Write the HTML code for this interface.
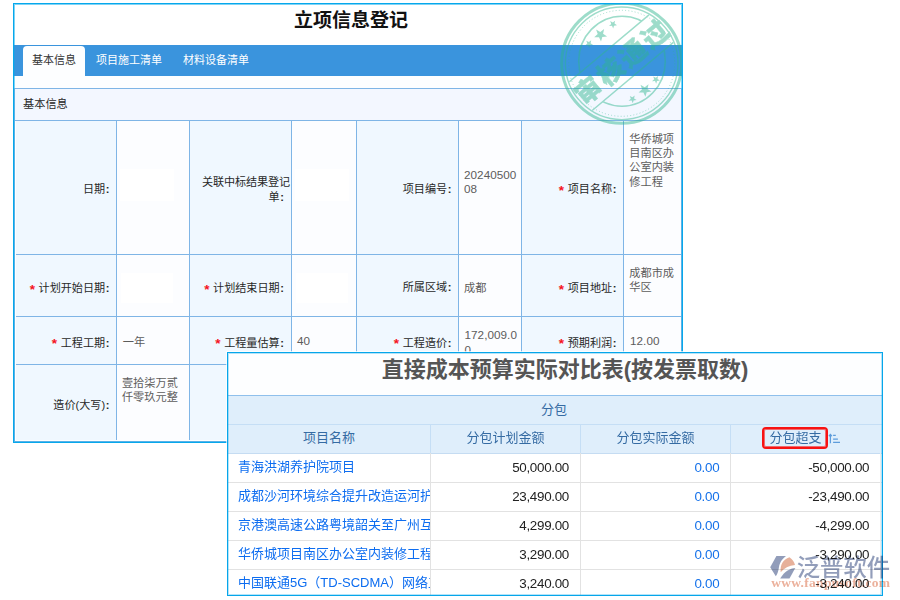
<!DOCTYPE html>
<html lang="zh-CN">
<head>
<meta charset="utf-8">
<title>立项信息登记</title>
<style>
html,body{margin:0;padding:0;}
body{width:900px;height:600px;position:relative;overflow:hidden;background:#fff;
  font-family:"Liberation Sans","Noto Sans CJK SC",sans-serif;color:#333;}
div,span{box-sizing:border-box;}
.abs{position:absolute;}
#form{left:13px;top:3px;width:670px;height:440px;border:1px solid #06a8ec;background:#fff;box-shadow:inset 0 0 0 1px rgba(6,168,236,.3);}
#ftitle{left:14px;top:4px;width:668px;height:41px;text-align:center;font-weight:bold;font-size:19px;line-height:33px;color:#111;padding-left:6px;}
#tabbar{left:14px;top:45px;width:668px;height:31px;background:#3a94dd;}
.tab{position:absolute;top:45px;height:31px;line-height:30px;font-size:11px;color:#fff;white-space:nowrap;}
#tab1{left:23px;top:46px;width:62px;height:30px;line-height:28px;background:#fdfeff;color:#333;border-radius:4px 4px 0 0;text-align:center;}
#gap{left:15px;top:76px;width:666px;height:12px;background:#fdfeff;}
#grid{left:14px;top:88px;width:668px;height:354px;background:#7fb5e6;}
#gw{left:15px;top:121px;width:666px;height:320px;background:#fff;}
#gl{left:16px;top:120px;width:665px;height:320px;background:#7fb5e6;}
.bg{position:absolute;}
.l{background:#f0f8ff;}
.v{background:#fcfdff;}
.t{position:absolute;font-size:11.1px;line-height:14.5px;white-space:nowrap;}
.lt{color:#282828;text-align:right;}
.vt{color:#5c5c5c;font-size:11.2px;line-height:14.2px;}
.dg{font-size:11.7px;letter-spacing:0.05px;}
.co{font-weight:bold;margin-left:0.6px;}
.mr{margin-right:-6px;letter-spacing:-0.1px;}
.star{color:#f5141e;font-size:13.5px;line-height:0;margin-right:3.6px;position:relative;top:1.4px;font-weight:bold;}
#panel{left:227px;top:352px;width:656px;height:244px;border:1px solid #06a6ea;background:#fff;box-shadow:inset 0 0 0 1px rgba(6,166,234,.3), 0 0 0 1px rgba(255,255,255,.7);}
#ptitle{left:228px;top:353px;width:654px;height:42px;text-align:center;font-weight:bold;font-size:22px;line-height:34px;color:#555;background:#fdfeff;padding-left:20px;}
.hb{position:absolute;background:#dfeefb;color:#356ba3;font-size:13px;text-align:center;}
.r{position:absolute;font-size:13px;line-height:27px;height:28px;white-space:nowrap;overflow:hidden;background:#fff;}
.n{color:#0d6df0;padding-left:10px;line-height:26px;}
.a{text-align:right;padding-right:11px;color:#222;}
.a2{padding-right:12.8px;}
.b{text-align:right;padding-right:10.7px;color:#1672ea;}
.num{font-size:13.4px;letter-spacing:-0.3px;}
</style>
</head>
<body>
<div id="form" class="abs"></div>
<div id="ftitle" class="abs">立项信息登记</div>
<div id="tabbar" class="abs"></div>
<div id="gap" class="abs"></div>
<div id="tab1" class="tab">基本信息</div>
<div class="tab" style="left:96px;">项目施工清单</div>
<div class="tab" style="left:183px;">材料设备清单</div>
<div id="grid" class="abs"></div>
<div id="gw" class="abs"></div>
<div id="gl" class="abs"></div>
<div class="bg" style="left:15px;top:89px;width:666px;height:31px;background:#f3f7ff;"></div>
<div class="t lt" style="left:23px;top:97px;font-size:11.2px;">基本信息</div>
<div class="bg l" style="left:16px;top:121px;width:100px;height:133px;"></div>
<div class="bg v" style="left:117px;top:121px;width:72px;height:133px;"></div>
<div class="bg l" style="left:190px;top:121px;width:101px;height:133px;"></div>
<div class="bg v" style="left:292px;top:121px;width:64px;height:133px;"></div>
<div class="bg l" style="left:357px;top:121px;width:101px;height:133px;"></div>
<div class="bg v" style="left:459px;top:121px;width:62px;height:133px;"></div>
<div class="bg l" style="left:522px;top:121px;width:101px;height:133px;"></div>
<div class="bg v" style="left:624px;top:121px;width:57px;height:133px;"></div>
<div class="bg l" style="left:16px;top:255px;width:100px;height:61px;"></div>
<div class="bg v" style="left:117px;top:255px;width:72px;height:61px;"></div>
<div class="bg l" style="left:190px;top:255px;width:101px;height:61px;"></div>
<div class="bg v" style="left:292px;top:255px;width:64px;height:61px;"></div>
<div class="bg l" style="left:357px;top:255px;width:101px;height:61px;"></div>
<div class="bg v" style="left:459px;top:255px;width:62px;height:61px;"></div>
<div class="bg l" style="left:522px;top:255px;width:101px;height:61px;"></div>
<div class="bg v" style="left:624px;top:255px;width:57px;height:61px;"></div>
<div class="bg l" style="left:16px;top:317px;width:100px;height:47px;"></div>
<div class="bg v" style="left:117px;top:317px;width:72px;height:47px;"></div>
<div class="bg l" style="left:190px;top:317px;width:101px;height:47px;"></div>
<div class="bg v" style="left:292px;top:317px;width:64px;height:47px;"></div>
<div class="bg l" style="left:357px;top:317px;width:101px;height:47px;"></div>
<div class="bg v" style="left:459px;top:317px;width:62px;height:47px;"></div>
<div class="bg l" style="left:522px;top:317px;width:101px;height:47px;"></div>
<div class="bg v" style="left:624px;top:317px;width:57px;height:47px;"></div>
<div class="bg l" style="left:16px;top:365px;width:100px;height:75px;"></div>
<div class="bg v" style="left:117px;top:365px;width:72px;height:75px;"></div>
<div class="bg l" style="left:190px;top:365px;width:101px;height:75px;"></div>
<div class="bg v" style="left:292px;top:365px;width:64px;height:75px;"></div>
<div class="bg l" style="left:357px;top:365px;width:101px;height:75px;"></div>
<div class="bg v" style="left:459px;top:365px;width:62px;height:75px;"></div>
<div class="bg l" style="left:522px;top:365px;width:101px;height:75px;"></div>
<div class="bg v" style="left:624px;top:365px;width:57px;height:75px;"></div>
<div class="bg" style="left:120px;top:169px;width:54px;height:32px;background:#fff;"></div>
<div class="bg" style="left:295px;top:169px;width:54px;height:32px;background:#fff;"></div>
<div class="bg" style="left:121px;top:273px;width:52px;height:30px;background:#fff;"></div>
<div class="bg" style="left:296px;top:273px;width:52px;height:30px;background:#fff;"></div>
<div class="t lt" style="right:790.6px;top:181.9px;">日期<span class="co">:</span></div>
<div class="t lt" style="right:616.1px;top:175.2px;"><span class="mr">关联中标结果登记</span><br>单<span class="co">:</span></div>
<div class="t lt" style="right:448.6px;top:182.4px;">项目编号<span class="co">:</span></div>
<div class="t lt" style="right:283.6px;top:182.4px;"><span class="star">*</span>项目名称<span class="co">:</span></div>
<div class="t lt" style="right:790.6px;top:281.4px;"><span class="star">*</span>计划开始日期<span class="co">:</span></div>
<div class="t lt" style="right:616.1px;top:281.4px;"><span class="star">*</span>计划结束日期<span class="co">:</span></div>
<div class="t lt" style="right:448.6px;top:280.1px;">所属区域<span class="co">:</span></div>
<div class="t lt" style="right:283.6px;top:281.4px;"><span class="star">*</span>项目地址<span class="co">:</span></div>
<div class="t lt" style="right:790.6px;top:335.9px;"><span class="star">*</span>工程工期<span class="co">:</span></div>
<div class="t lt" style="right:616.1px;top:335.9px;"><span class="star">*</span>工程量估算<span class="co">:</span></div>
<div class="t lt" style="right:448.6px;top:335.9px;"><span class="star">*</span>工程造价<span class="co">:</span></div>
<div class="t lt" style="right:283.6px;top:335.9px;"><span class="star">*</span>预期利润<span class="co">:</span></div>
<div class="t lt" style="right:790.6px;top:397.9px;">造价(大写)<span class="co">:</span></div>
<div class="t vt dg" style="left:464.0px;top:167.9px;">20240500<br>08</div>
<div class="t vt" style="left:629.3px;top:132.0px;">华侨城项<br>目南区办<br>公室内装<br>修工程</div>
<div class="t vt" style="left:464.0px;top:280.6px;">成都</div>
<div class="t vt" style="left:629.3px;top:266.1px;">成都市成<br>华区</div>
<div class="t vt" style="left:122.7px;top:335.2px;">一年</div>
<div class="t vt dg" style="left:297.0px;top:334.4px;">40</div>
<div class="t vt dg" style="left:464.5px;top:328.3px;">172,009.0<br>0</div>
<div class="t vt dg" style="left:630.0px;top:334.1px;">12.00</div>
<div class="t vt" style="left:121.9px;top:376.2px;">壹拾柒万贰<br>仟零玖元整</div>
<svg class="abs" style="left:557px;top:4px;opacity:0.47;will-change:transform;" width="126" height="126" viewBox="0 4 126 126">
<g transform="translate(64.7,63.3)" fill="none" stroke="#2fb68e">
<circle r="60" stroke-width="3"/>
<circle r="56.3" stroke-width="1.4"/>
<circle r="53" stroke-width="1" stroke-dasharray="1 2.2"/>
<clipPath id="cpo" transform="rotate(-40)"><path d="M-70,-70H70V-19.5H-70Z M-70,17.2H70V70H-70Z"/></clipPath>
<ellipse cx="0.3" cy="-2.1" rx="43.3" ry="45" stroke-width="1.6" clip-path="url(#cpo)"/>
<g transform="rotate(-40)">
<line x1="-52" y1="-19.5" x2="52" y2="-19.5" stroke-width="1.5"/>
<line x1="-53" y1="17.2" x2="53" y2="17.2" stroke-width="1.5"/>
<text x="2" y="9" text-anchor="middle" font-family="'Liberation Sans','Noto Sans CJK SC',sans-serif" font-weight="900" font-size="26.5" fill="#2fb68e" stroke="#2fb68e" stroke-width="0.4" letter-spacing="2.5">审核通过</text>
</g>
<g fill="#2fb68e" stroke="none"><polygon points="-25.6,-33.7 -21.4,-31.3 -17.6,-34.3 -18.6,-29.6 -14.6,-26.9 -19.4,-26.3 -20.7,-21.7 -22.7,-26.1 -27.5,-26.0 -24.0,-29.2"/><polygon points="-11.5,-42.2 -8.9,-40.8 -6.6,-42.6 -7.2,-39.7 -4.7,-38.0 -7.7,-37.6 -8.5,-34.8 -9.7,-37.5 -12.7,-37.4 -10.5,-39.4"/><polygon points="-35.4,-22.6 -32.8,-21.2 -30.5,-23.0 -31.1,-20.1 -28.6,-18.4 -31.6,-18.0 -32.4,-15.2 -33.6,-17.9 -36.6,-17.8 -34.4,-19.8"/><polygon points="18.8,21.5 23.0,23.9 26.8,20.9 25.8,25.6 29.8,28.3 25.0,28.9 23.7,33.5 21.7,29.1 16.9,29.2 20.4,26.0"/><polygon points="31.5,13.1 34.1,14.5 36.4,12.7 35.8,15.6 38.3,17.3 35.3,17.7 34.5,20.5 33.3,17.8 30.3,17.9 32.5,15.9"/><polygon points="8.1,32.6 10.7,34.0 13.0,32.2 12.4,35.1 14.9,36.8 11.9,37.2 11.1,40.0 9.9,37.3 6.9,37.4 9.1,35.4"/></g>
</g>
</svg>
<div class="abs" style="left:13px;top:3px;width:670px;height:440px;border:1px solid #06a8ec;box-shadow:inset 0 0 0 1px rgba(6,168,236,.3);"></div>
<div id="panel" class="abs"></div>
<div id="ptitle" class="abs">直接成本预算实际对比表(按发票取数)</div>
<div class="hb" style="left:228px;top:395px;width:654px;height:29px;line-height:27px;border-top:1px solid #8fc0ec;padding-right:2px;">分包</div>
<div class="hb" style="left:228px;top:425px;width:202px;height:28px;line-height:26px;">项目名称</div>
<div class="hb" style="left:431px;top:425px;width:149px;height:28px;line-height:26px;">分包计划金额</div>
<div class="hb" style="left:581px;top:425px;width:149px;height:28px;line-height:26px;">分包实际金额</div>
<div class="hb" style="left:731px;top:425px;width:151px;height:28px;line-height:26px;padding-right:22px;">分包超支</div>
<div class="abs" style="left:228px;top:424px;width:654px;height:1px;background:#c5def5;"></div>
<div class="abs" style="left:430px;top:425px;width:1px;height:28px;background:#c5def5;"></div>
<div class="abs" style="left:580px;top:425px;width:1px;height:28px;background:#c5def5;"></div>
<div class="abs" style="left:730px;top:425px;width:1px;height:28px;background:#c5def5;"></div>
<div class="abs" style="left:228px;top:453px;width:654px;height:1px;background:#c5dcf2;"></div>
<div class="r n" style="left:228px;top:454px;width:202px;height:28px;">青海洪湖养护院项目</div>
<div class="r a num" style="left:431px;top:454px;width:149px;height:28px;">50,000.00</div>
<div class="r b num" style="left:581px;top:454px;width:149px;height:28px;">0.00</div>
<div class="r a a2 num" style="left:731px;top:454px;width:151px;height:28px;">-50,000.00</div>
<div class="abs" style="left:228px;top:482px;width:654px;height:1px;background:#e2e2e2;"></div>
<div class="r n" style="left:228px;top:483px;width:202px;height:28px;">成都沙河环境综合提升改造运河护</div>
<div class="r a num" style="left:431px;top:483px;width:149px;height:28px;">23,490.00</div>
<div class="r b num" style="left:581px;top:483px;width:149px;height:28px;">0.00</div>
<div class="r a a2 num" style="left:731px;top:483px;width:151px;height:28px;">-23,490.00</div>
<div class="abs" style="left:228px;top:511px;width:654px;height:1px;background:#e2e2e2;"></div>
<div class="r n" style="left:228px;top:512px;width:202px;height:28px;">京港澳高速公路粤境韶关至广州互</div>
<div class="r a num" style="left:431px;top:512px;width:149px;height:28px;">4,299.00</div>
<div class="r b num" style="left:581px;top:512px;width:149px;height:28px;">0.00</div>
<div class="r a a2 num" style="left:731px;top:512px;width:151px;height:28px;">-4,299.00</div>
<div class="abs" style="left:228px;top:540px;width:654px;height:1px;background:#e2e2e2;"></div>
<div class="r n" style="left:228px;top:541px;width:202px;height:28px;">华侨城项目南区办公室内装修工程</div>
<div class="r a num" style="left:431px;top:541px;width:149px;height:28px;">3,290.00</div>
<div class="r b num" style="left:581px;top:541px;width:149px;height:28px;">0.00</div>
<div class="r a a2 num" style="left:731px;top:541px;width:151px;height:28px;">-3,290.00</div>
<div class="abs" style="left:228px;top:569px;width:654px;height:1px;background:#e2e2e2;"></div>
<div class="r n" style="left:228px;top:570px;width:202px;height:25px;">中国联通5G（TD-SCDMA）网络工</div>
<div class="r a num" style="left:431px;top:570px;width:149px;height:25px;">3,240.00</div>
<div class="r b num" style="left:581px;top:570px;width:149px;height:25px;">0.00</div>
<div class="r a a2 num" style="left:731px;top:570px;width:151px;height:25px;">-3,240.00</div>
<div class="abs" style="left:430px;top:453px;width:1px;height:142px;background:#e2e2e2;"></div>
<div class="abs" style="left:580px;top:453px;width:1px;height:142px;background:#e2e2e2;"></div>
<div class="abs" style="left:730px;top:453px;width:1px;height:142px;background:#e2e2e2;"></div>
<div class="abs" style="left:880px;top:453px;width:1px;height:142px;background:#ececec;"></div>
<div class="abs" style="left:762px;top:427px;width:66px;height:22px;border:2px solid #f81212;border-radius:4px;box-shadow:inset 0 0 0 1px rgba(248,18,18,.6);"></div>
<svg class="abs" style="left:828px;top:433px;" width="14" height="12" viewBox="0 0 14 12" fill="none" stroke="#5d9cdb" stroke-width="1.25">
<path d="M2.4 1.6V10.2M0.9 3.1L2.4 1.5L3.9 3.1M5.1 2.3H7.8M5.1 6H9.9M5.1 9.4H12"/>
</svg>
<div class="abs" style="left:227px;top:352px;width:656px;height:244px;border:1px solid #06a6ea;box-shadow:inset 0 0 0 1px rgba(6,166,234,.3);"></div>
<svg class="abs" style="left:768px;top:552px;opacity:0.88;mix-blend-mode:multiply;" width="128" height="44" viewBox="0 0 128 44">
<path d="M2.2 15.2L8.4 4.1H18C13 8 11.5 12 11 15C10.5 19 9.5 22 7.8 24.2Z" fill="#8390b1"/>
<path d="M12.7 20.2C12 13 15 7.5 21.5 5.3C24.5 7.5 26.3 10 27 12.9C21 13.5 16 16 12.7 20.2Z" fill="#e3a58c"/>
<path d="M12.2 26.6H21.5L27.3 16.1C22 16.3 16 20 12.2 26.6Z" fill="#8390b1"/>
<text x="28.8" y="24" font-family="'Liberation Sans','Noto Sans CJK SC',sans-serif" font-weight="500" font-size="23.3" fill="#8390b1">泛普软件</text>
<text x="3.2" y="35.4" font-family="'Liberation Serif',serif" font-weight="bold" font-size="13.5" fill="#e9a68e" letter-spacing="0.3">www.fanpusoft.com</text>
</svg>
</body>
</html>
